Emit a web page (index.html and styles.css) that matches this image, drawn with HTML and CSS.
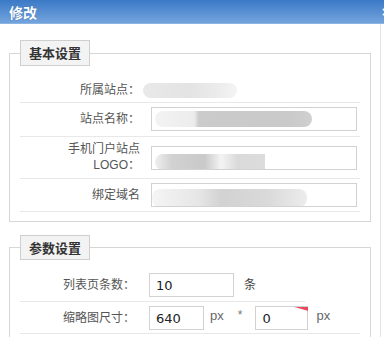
FILE: index.html
```html
<!DOCTYPE html>
<html lang="zh-CN">
<head>
  <meta charset="UTF-8">
  <title>修改</title>
  <link rel="stylesheet" href="styles.css">
</head>
<body>
  <div class="titlebar">
    <span class="title">修改</span>
    <span class="close">×</span>
  </div>

  <div class="dialog-body">
    <div class="content">
      <fieldset class="group">
        <legend>基本设置</legend>
        <div class="row row-static">
          <label>所属站点：</label>
          <span class="blur blur-site"></span>
        </div>
        <div class="row">
          <label>站点名称：</label>
          <div class="field field-wide"><span class="blur blur-name"></span></div>
        </div>
        <div class="row row-tall">
          <label>手机门户站点<br>LOGO：</label>
          <div class="field field-wide"><span class="blur blur-logo"></span></div>
        </div>
        <div class="row row-end">
          <label>绑定域名</label>
          <div class="field field-wide"><span class="blur blur-domain"></span></div>
        </div>
      </fieldset>

      <fieldset class="group group-params">
        <legend>参数设置</legend>
        <div class="row row-short">
          <label>列表页条数：</label>
          <input class="input input-count" type="text" value="10">
          <span class="unit unit-cn">条</span>
        </div>
        <div class="row row-last">
          <label>缩略图尺寸：</label>
          <input class="input input-size" type="text" value="640">
          <span class="unit">px</span>
          <span class="times">*</span>
          <span class="field-wrap">
            <input class="input input-size input-height" type="text" value="0">
            <span class="mark"></span>
          </span>
          <span class="unit unit-end">px</span>
        </div>
      </fieldset>
    </div>
    <div class="track"></div>
  </div>
</body>
</html>
```

FILE: styles.css
```css
body { margin: 0; background: #fff; font-family: "Liberation Sans", "Noto Sans CJK SC", sans-serif; font-size: 12px; color: #555; overflow: hidden; }

.titlebar { height: 24px; background: linear-gradient(#3b79c6, #73a4dc); border-bottom: 1px solid #8db3e3; display: flex; justify-content: space-between; align-items: center; padding-left: 9px; box-sizing: border-box; }
.title { color: #fff; font-family: "Noto Sans CJK SC", sans-serif; font-weight: bold; font-size: 14px; text-shadow: 0 0 1px #2a5c9a; }
.close { color: #fff; font-weight: bold; font-size: 14px; margin-right: -6px; }

.dialog-body { display: flex; }
.content { width: 372px; padding-left: 9px; box-sizing: border-box; }
.track { width: 3px; margin-left: 9px; border-left: 1px solid #e4e4e4; height: 313px; }

.group { margin: 16px 0 0; border: 1px solid #d6d6d6; padding: 0 10px 9px; min-width: 0; }
.group legend { height: 26px; line-height: 24px; padding: 0 8px; border: 1px solid #cfcfcf; background: #f3f3f3; box-sizing: border-box; font-family: "Noto Sans CJK SC", sans-serif; font-weight: bold; font-size: 13px; color: #333; }
.group-params { margin-top: 13px; padding-bottom: 20px; }
.group-params legend { height: 25px; line-height: 23px; }

.row { display: flex; align-items: center; border-bottom: 1px solid #e8e8e8; padding: 4px 0 5px; }
.row label { width: 120px; margin-right: 11px; text-align: right; line-height: 16px; flex-shrink: 0; }
.row-static { padding: 12px 0 0; height: 24px; }
.row-static label { margin-right: 3px; }
.row-tall { padding: 6px 0 5px; }
.row-tall label { margin-top: -2px; }
.row-end { padding-bottom: 4px; }

.group-params .row label { width: 115px; margin-right: 14px; }
.row-short { width: 285px; padding: 13px 0 4px; }
.row-last { padding: 4px 0 3px; }

.field { height: 24px; border: 1px solid #d2d2d2; box-sizing: border-box; background: #fff; overflow: hidden; display: flex; align-items: center; }
.field-wide { width: 206px; }

.blur { display: block; height: 16px; border-radius: 8px; filter: blur(0.6px); }
.blur-site { width: 94px; height: 15px; background: linear-gradient(90deg, #e9e9e9, #e3e3e3 50%, #ececec 80%, #f4f4f4); }
.blur-name { width: 157px; margin-left: 3px; background: linear-gradient(90deg, #f3f3f3, #ececec 25%, #cbcbcb 28%, #c9c9c9 85%, #d0d0d0); }
.blur-logo { width: 110px; margin-left: 3px; margin-top: 8px; background: linear-gradient(90deg, #efefef, #d2d2d2 15%, #c9c9c9 45%, #f4f4f4 60%, #dadada 75%, #dcdcdc); border-radius: 8px 0 0 8px; }
.blur-domain { width: 155px; height: 18px; margin-top: 6px; background: linear-gradient(90deg, #f5f5f5, #e6e6e6 30%, #d2d2d2 45%, #dadada 75%, #ececec); }

.input { height: 24px; border: 1px solid #d2d2d2; box-sizing: border-box; padding: 0 6px; font-family: "DejaVu Sans", sans-serif; font-size: 13px; color: #222; outline: none; }
.input-count { width: 85px; }
.input-size { width: 55px; }
.input-height { width: 53px; }

.unit { color: #666; font-size: 13px; margin-left: 6px; margin-top: -5px; }
.unit-cn { margin-left: 10px; margin-top: -3px; font-family: "Noto Sans CJK SC", sans-serif; font-size: 12px; color: #444; }
.unit-end { margin-left: 8px; }
.times { color: #777; margin: -6px 13px 0 14px; }

.field-wrap { position: relative; display: flex; }
.mark { position: absolute; top: 1px; right: 0; width: 14px; height: 4px; background: #e8485a; clip-path: polygon(0 0, 100% 0, 100% 100%); }
```
